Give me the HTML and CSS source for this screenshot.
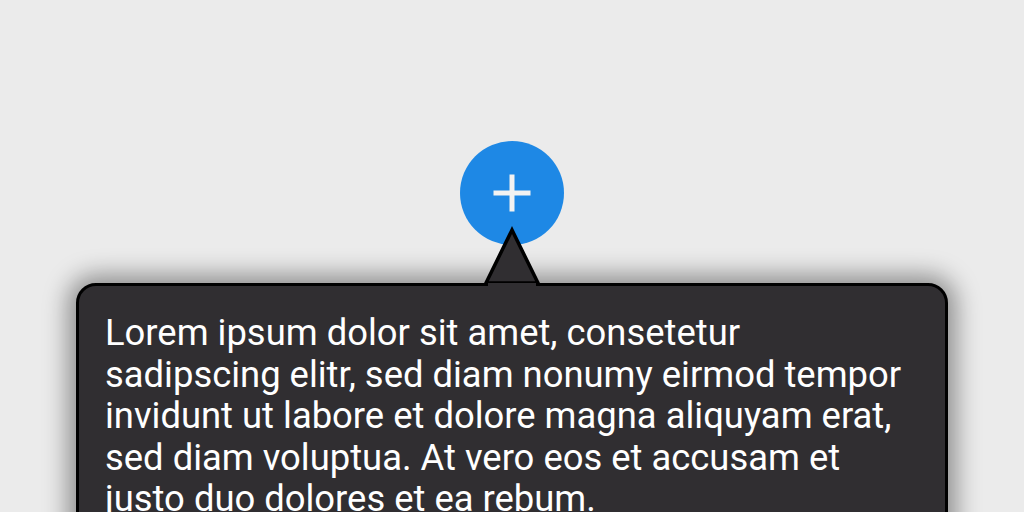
FILE: index.html
```html
<!DOCTYPE html>
<html>
<head>
<meta charset="utf-8">
<link rel="stylesheet" href="styles.css">
</head>
<body>
<div class="stage">
  <button class="fab" aria-label="Add">
    <svg width="40" height="40" viewBox="0 0 40 40"><path d="M20 1.5V38.5M1.5 20H38.5" stroke="#f2f2f2" stroke-width="5"/></svg>
  </button>
  <div class="tooltip">
    <svg class="arrow" width="70" height="62" viewBox="0 0 70 62">
      <polygon points="9,57 35,4 61,57" fill="#302e31" stroke="#000" stroke-width="3.5" stroke-linejoin="miter"/>
      <rect x="11" y="57" width="48" height="6" fill="#302e31"/>
    </svg>
    <p class="text">Lorem ipsum dolor sit amet, consetetur sadipscing elitr, sed diam nonumy eirmod tempor invidunt ut labore et dolore magna aliquyam erat, sed diam voluptua. At vero eos et accusam et justo duo dolores et ea rebum.</p>
  </div>
</div>
</body>
</html>
```

FILE: styles.css
```css
html, body {
  margin: 0;
  padding: 0;
  background: #ebebeb;
  overflow: hidden;
  height: 512px;
}
.stage {
  display: flex;
  flex-direction: column;
  align-items: center;
  padding-top: 141px;
}
.fab {
  width: 104px;
  height: 104px;
  border-radius: 50%;
  border: none;
  background: #1e88e5;
  display: flex;
  align-items: center;
  justify-content: center;
  padding: 0;
  margin: 0;
}
.tooltip {
  position: relative;
  margin-top: 38px;
  width: 872px;
  box-sizing: border-box;
  background: #302e31;
  border: 3px solid #000;
  border-radius: 20px;
  padding: 26px 36px 40px 26px;
  box-shadow: 0 0 24px 8px rgba(0,0,0,0.4);
}
.arrow {
  position: absolute;
  left: 50%;
  margin-left: -35px;
  top: -60px;
}
.text {
  margin: 0;
  color: #ffffff;
  font-family: Roboto, "Liberation Sans", sans-serif;
  font-size: 36.4px;
  line-height: 41.5px;
}
```
